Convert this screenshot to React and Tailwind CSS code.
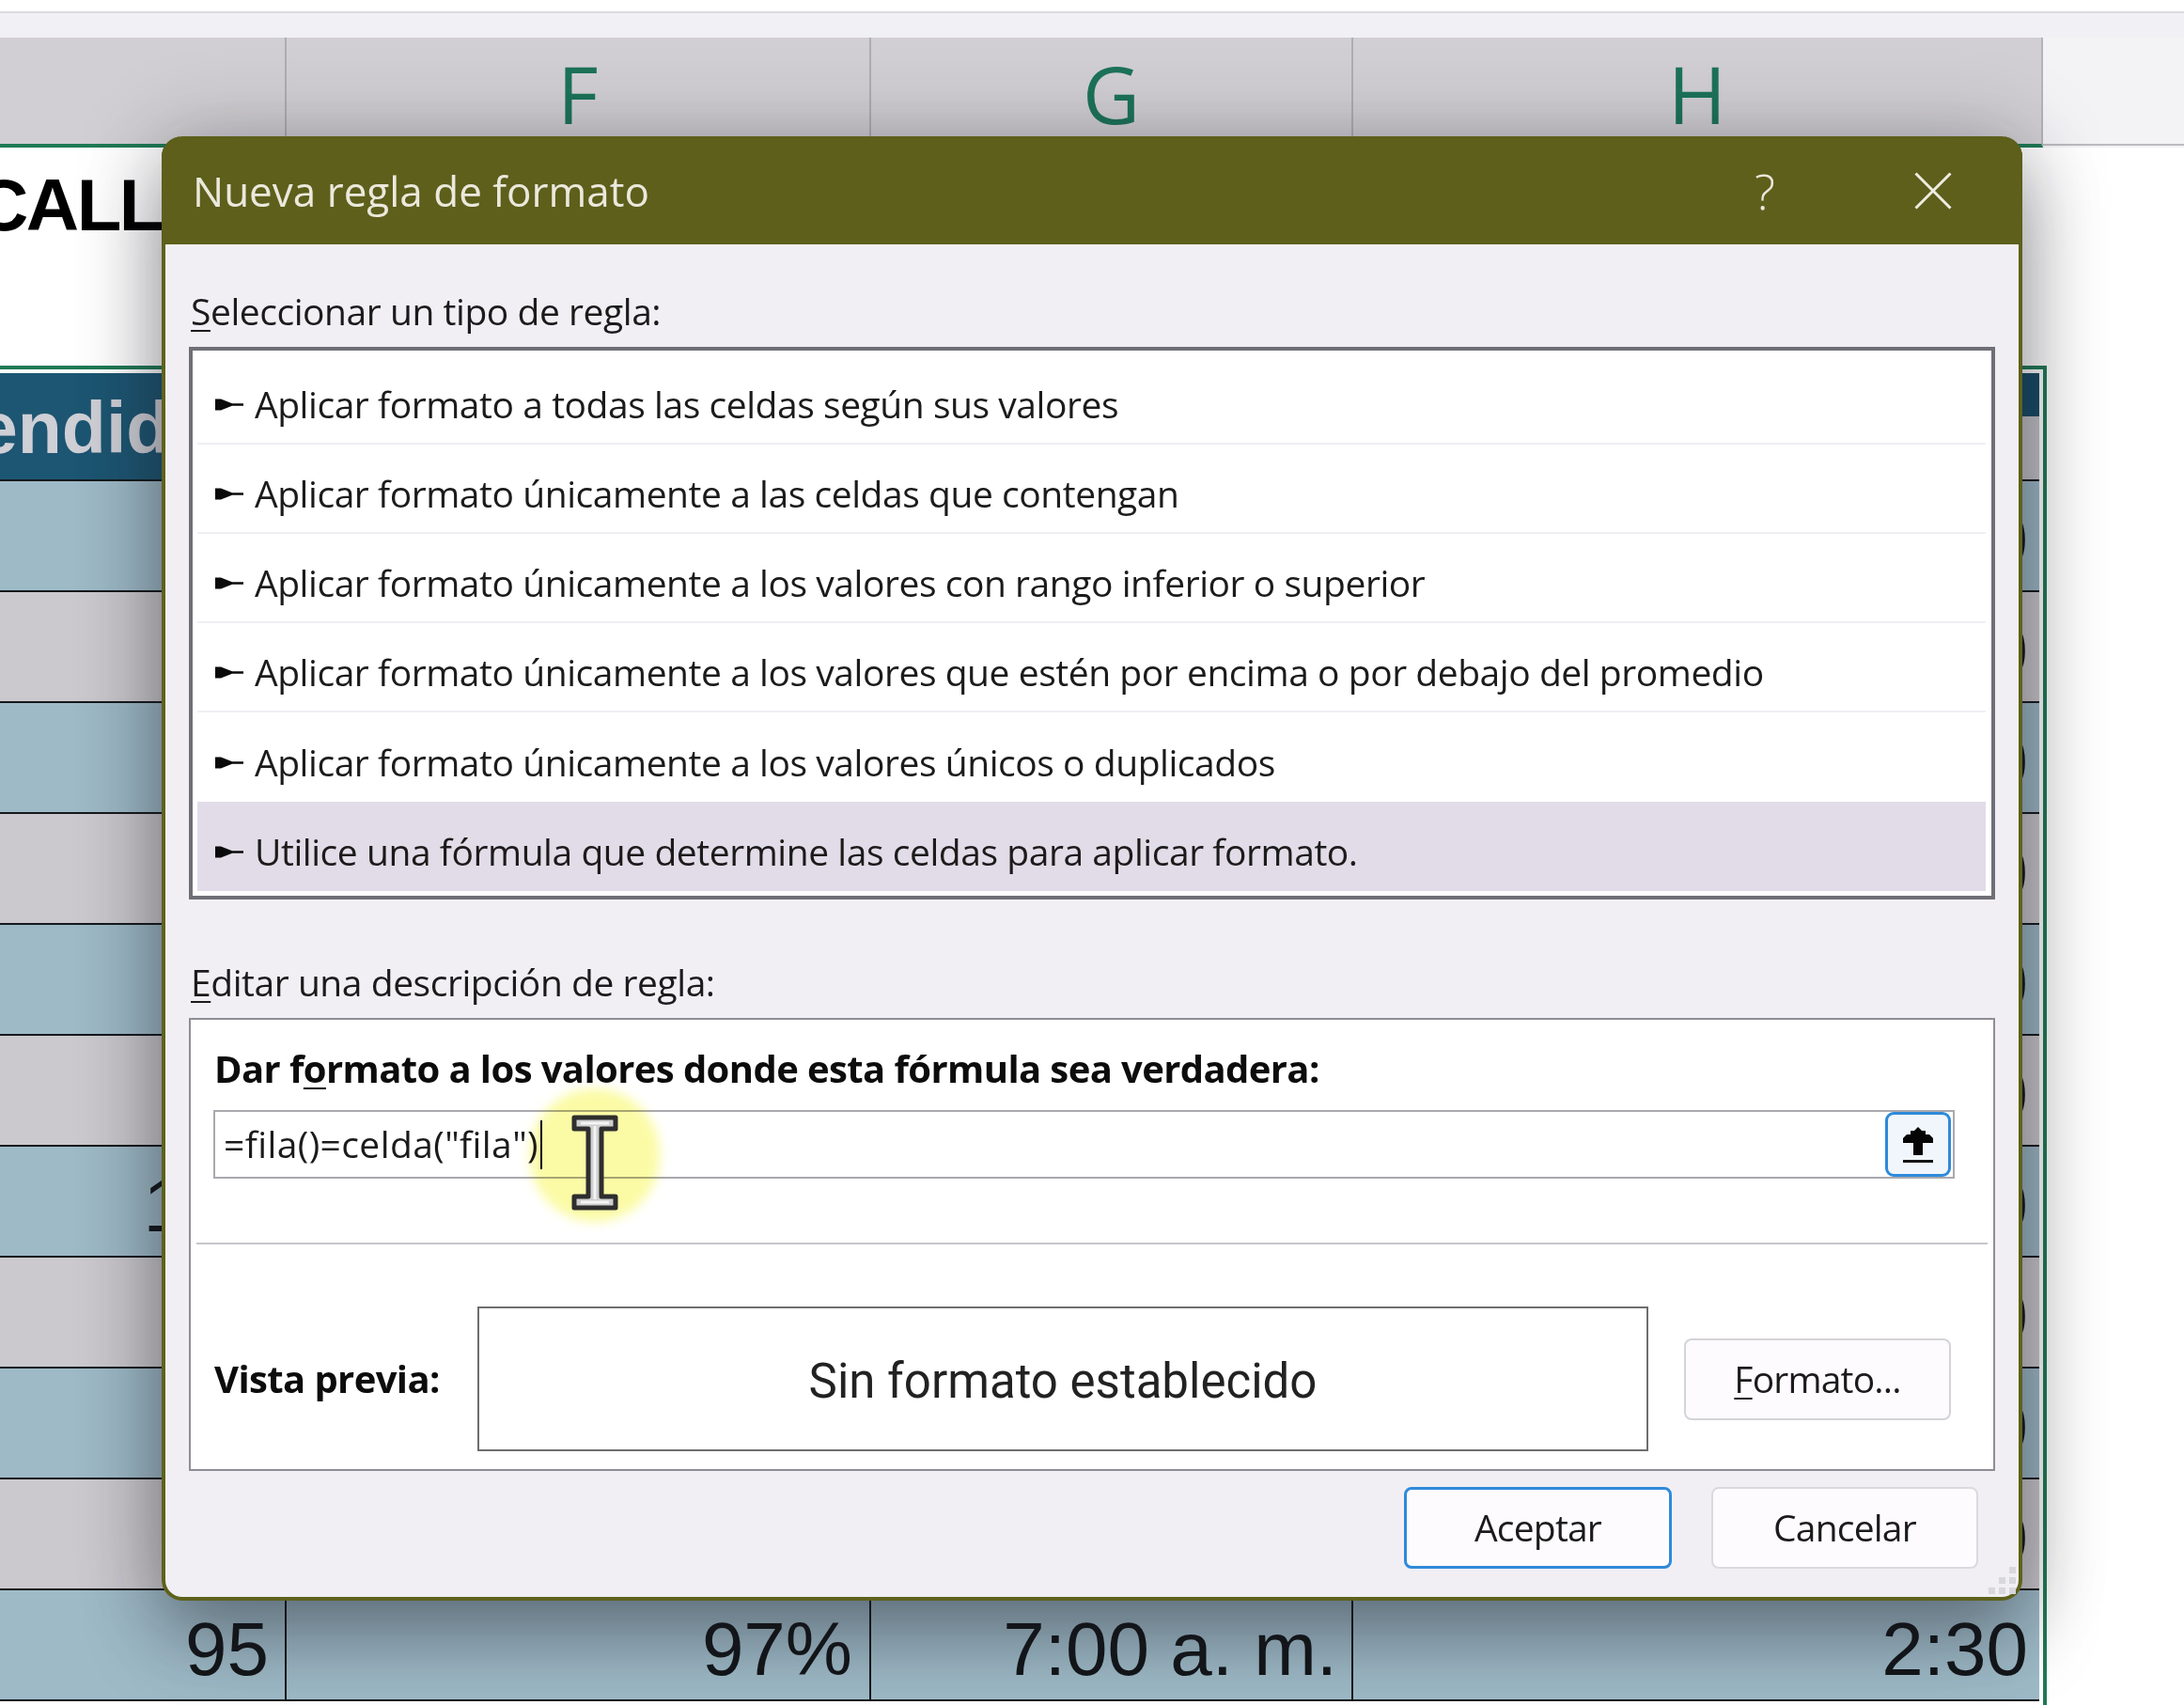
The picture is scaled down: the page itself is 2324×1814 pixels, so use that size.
const ui = { fontFamily: '"Open Sans", "Noto Sans", sans-serif' };
const arial = { fontFamily: '"Liberation Sans", Arial, sans-serif' };

const rules = [
  'Aplicar formato a todas las celdas según sus valores',
  'Aplicar formato únicamente a las celdas que contengan',
  'Aplicar formato únicamente a los valores con rango inferior o superior',
  'Aplicar formato únicamente a los valores que estén por encima o por debajo del promedio',
  'Aplicar formato únicamente a los valores únicos o duplicados',
  'Utilice una fórmula que determine las celdas para aplicar formato.',
];

const rows = [
  ['98', '96%', '7:00 a. m.', '2:30', true],
  ['90', '94%', '7:00 a. m.', '2:30', false],
  ['92', '95%', '7:00 a. m.', '2:30', true],
  ['88', '93%', '7:00 a. m.', '2:30', false],
  ['97', '98%', '7:00 a. m.', '2:30', true],
  ['85', '92%', '7:00 a. m.', '2:30', false],
  ['100', '99%', '7:00 a. m.', '2:30', true],
  ['91', '95%', '7:00 a. m.', '2:30', false],
  ['94', '96%', '7:00 a. m.', '2:30', true],
  ['89', '93%', '7:00 a. m.', '2:30', false],
  ['95', '97%', '7:00 a. m.', '2:30', true],
];

function HeadCell({ w, label, last }) {
  return (
    <div className={`${w} h-full shrink-0 flex items-start justify-center border-b-4 border-[#1f7a55] ${last ? 'border-r-2 border-r-[#b4b3b8]' : 'border-r-2 border-r-[#aeadb2]'}`}>
      {label ? (
        <span className="text-[84px] leading-[114px] text-[#1c7358] mt-[3px]" style={ui}>{label}</span>
      ) : null}
    </div>
  );
}

function Arrow() {
  return (
    <svg width="30" height="13" viewBox="0 0 30 13" className="shrink-0">
      <path d="M0 0.5 L6 0.5 L18 5.2 L30 5.2 L30 7.8 L18 7.8 L6 12.5 L0 12.5 Z" fill="#0a0a0a" />
    </svg>
  );
}

function Row({ r }) {
  const cell = 'h-full shrink-0 flex items-center justify-end border-r-2 border-[#15191c] text-[80px] text-[#14171a] pt-[10px]';
  return (
    <div className={`h-[118px] flex border-b-2 border-[#15191c] ${r[4] ? 'bg-[#9ebac7]' : 'bg-[#cbc9cd]'}`} style={arial}>
      <div className={`${cell} w-[305px] pr-[17px]`}>{r[0]}</div>
      <div className={`${cell} w-[622px] pr-[18px]`}>{r[1]}</div>
      <div className={`${cell} w-[513px] pr-[15px]`}>{r[2]}</div>
      <div className="h-full flex-1 flex items-center justify-end pr-[12px] pt-[10px] text-[80px] text-[#14171a]">{r[3]}</div>
    </div>
  );
}

function Btn({ className, children }) {
  return (
    <div className={`flex items-center justify-center rounded-[8px] text-[39px] tracking-[-0.8px] text-[#1b1b1b] ${className}`}>
      {children}
    </div>
  );
}

export default function App() {
  return (
    <div className="relative w-[2324px] h-[1814px] overflow-hidden bg-white flex flex-col">
      {/* top chrome */}
      <div className="h-[12px] shrink-0 bg-white" />
      <div className="h-[28px] shrink-0 bg-[#f1f0f4] border-t-2 border-[#dcdbdf]" />

      {/* column header */}
      <div className="h-[117px] shrink-0 flex bg-[#f3f2f5]">
        <div className="flex w-[2174px] bg-[#d1cfd3]">
          <HeadCell w="w-[305px]" />
          <HeadCell w="w-[622px]" label="F" />
          <HeadCell w="w-[513px]" label="G" />
          <HeadCell w="flex-1" label="H" last />
        </div>
        <div className="flex-1 border-b-2 border-[#bcbbc0] mb-[2px]" />
      </div>

      {/* title row */}
      <div className="h-[232px] shrink-0 w-[2174px] flex items-start overflow-hidden bg-white">
        <span className="text-[78px] font-bold leading-[90px] tracking-[-2.5px] mt-[16px] ml-[-26px] text-black whitespace-nowrap" style={arial}>CALL</span>
      </div>

      {/* table */}
      <div className="w-[2178px] border-t-4 border-r-4 border-[#1f7a55] pt-[4px] pr-[4px] bg-white flex-1 overflow-hidden">
        <div className="h-[115px] flex border-b-2 border-[#15191c]">
          <div className="w-[1440px] bg-[#1d5672] flex items-center overflow-hidden pt-[4px]">
            <span className="text-[77px] font-bold leading-none ml-[-24px] text-[#cfcfd6] whitespace-nowrap" style={arial}>endido</span>
          </div>
          <div className="flex-1 flex flex-col">
            <div className="h-[46px] bg-[#174c66]" />
            <div className="flex-1 bg-[#c6c4c9]" />
          </div>
        </div>
        {rows.map((r, i) => <Row key={i} r={r} />)}
      </div>

      {/* dialog */}
      <div
        className="absolute left-[172px] top-[145px] w-[1980px] h-[1558px] flex flex-col rounded-[22px] border-x-4 border-b-4 border-[#5f611c] bg-[#f1eff4] shadow-[0_40px_80px_rgba(20,20,30,0.35),0_0_90px_rgba(30,30,45,0.25)]"
        style={ui}
      >
        <div className="h-[115px] shrink-0 -mx-[4px] rounded-t-[22px] bg-[#5d5f1b] flex items-center pl-[33px] pr-[75px] text-[#ebe8dc]">
          <span className="text-[44px]">Nueva regla de formato</span>
          <span className="ml-auto text-[52px] font-light mr-[148px]">?</span>
          <svg width="40" height="40" viewBox="0 0 40 40">
            <path d="M1.5 1.5 L38.5 38.5 M38.5 1.5 L1.5 38.5" stroke="#efece2" strokeWidth="3" fill="none" />
          </svg>
        </div>

        <div className="flex-1 flex flex-col px-[25px] text-[#1b1b1b]">
          <div className="mt-[46px] mb-[13px] ml-[2px] text-[39px] leading-[50px] tracking-[-0.45px]">
            <u className="underline-offset-[5px] decoration-2">S</u>eleccionar un tipo de regla:
          </div>

          <div className="h-[588px] shrink-0 border-4 border-[#6f6f77] bg-white pt-[5px] pl-[5px] pr-[6px]">
            {rules.map((t, i) => (
              <div
                key={t}
                className={`h-[95px] flex items-center gap-[12px] pl-[19px] pt-[12px] text-[39px] tracking-[-0.45px] ${i === 5 ? 'bg-[#e2dce8]' : i < 4 ? 'border-b-2 border-[#f0eef3]' : ''}`}
              >
                <Arrow />
                <span className="whitespace-nowrap">{t}</span>
              </div>
            ))}
          </div>

          <div className="mt-[63px] mb-[13px] ml-[2px] text-[39px] leading-[50px] tracking-[-0.45px]">
            <u className="underline-offset-[5px] decoration-2">E</u>ditar una descripción de regla:
          </div>

          <div className="h-[482px] shrink-0 border-2 border-[#8e8d95] bg-white flex flex-col">
            <div className="mt-[27px] ml-[25px] text-[40px] leading-[50px] font-bold tracking-[-0.6px] text-[#0c0c0c]">
              Dar f<u className="underline-offset-[5px] decoration-2">o</u>rmato a los valores donde esta fórmula sea verdadera:
            </div>

            <div className="mt-[19px] ml-[24px] w-[1853px] h-[73px] shrink-0 border-2 border-[#aaa9ae] flex items-center justify-between pl-[9px] pr-[2px]">
              <div className="flex items-center text-[39px] tracking-[0.4px]">
                <span>=fila()=celda("fila")</span>
                <span className="w-[2px] h-[52px] bg-black ml-[2px]" />
              </div>
              <div className="w-[70px] h-[69px] rounded-[9px] border-[3px] border-[#2f8ad9] bg-[#f1f6fd] flex items-center justify-center">
                <svg width="32" height="40" viewBox="0 0 32 40">
                  <path d="M16 1 L20 5 L24 5 L24 9 L28 9 L32 13 L32 18 L21 18 L21 31 L11 31 L11 18 L0 18 L0 13 L4 9 L8 9 L8 5 L12 5 Z" fill="#050505" />
                  <rect x="0" y="36" width="32" height="3" fill="#151515" />
                </svg>
              </div>
            </div>

            <div className="mt-[68px] mx-[6px] h-[2px] shrink-0 bg-[#c6c5ca]" />

            <div className="mt-[66px] ml-[25px] flex items-center">
              <div className="w-[280px] text-[40px] font-bold tracking-[-0.6px] text-[#0c0c0c]">Vista previa:</div>
              <div
                className="w-[1246px] h-[154px] border-2 border-[#6e6e70] bg-white flex items-center justify-center pt-[6px] text-[51px] text-[#222]"
                style={{ fontFamily: 'Roboto, sans-serif' }}
              >
                Sin formato establecido
              </div>
              <Btn className="ml-[38px] w-[284px] h-[87px] border-2 border-[#d4d3d8] bg-[#fdfbfe]">
                <span><u className="underline-offset-[5px] decoration-2">F</u>ormato...</span>
              </Btn>
            </div>
          </div>

          <div className="mt-[17px] mr-[18px] flex justify-end gap-[42px]">
            <Btn className="w-[285px] h-[87px] border-[3px] border-[#2f8ad9] bg-[#fdfbfe]">Aceptar</Btn>
            <Btn className="w-[284px] h-[87px] border-2 border-[#dadade] bg-[#fdfbfe]">Cancelar</Btn>
          </div>
        </div>

        {/* resize grip */}
        <svg width="32" height="32" viewBox="0 0 32 32" className="absolute right-[2px] bottom-[2px]">
          <g fill="#d8d7dc">
            <rect x="24" y="2" width="7" height="7" />
            <rect x="13" y="13" width="7" height="7" />
            <rect x="24" y="13" width="7" height="7" />
            <rect x="2" y="24" width="7" height="7" />
            <rect x="13" y="24" width="7" height="7" />
            <rect x="24" y="24" width="7" height="7" />
          </g>
        </svg>
      </div>

      {/* cursor highlight and I-beam */}
      <div className="absolute left-[564px] top-[1158px] w-[138px] h-[142px] rounded-full bg-[#fbfba6] blur-[6px] mix-blend-multiply" />
      <svg width="50" height="102" viewBox="0 0 50 102" className="absolute left-[608px] top-[1186px]">
        <path
          d="M3 3 H47 V15 H32 V87 H47 V99 H3 V87 H18 V15 H3 Z"
          fill="#cfcfcf"
          stroke="#2e2e2e"
          strokeWidth="5"
          strokeLinejoin="round"
        />
        <path d="M10 9 H40 M25 12 V90 M10 93 H40" stroke="#f4f4f4" strokeWidth="3" fill="none" />
      </svg>
    </div>
  );
}
